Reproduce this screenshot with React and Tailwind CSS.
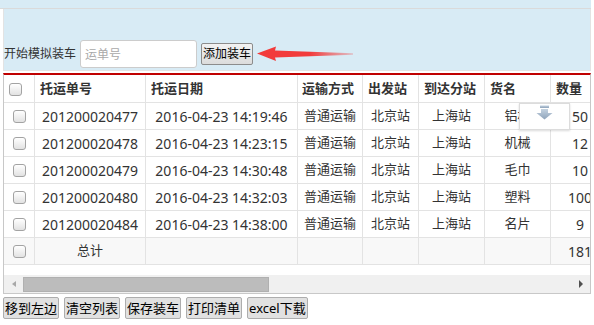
import React from "react";

const rows = [
  ["201200020477", "2016-04-23 14:19:46", "普通运输", "北京站", "上海站", "铝材", "50"],
  ["201200020478", "2016-04-23 14:23:15", "普通运输", "北京站", "上海站", "机械", "12"],
  ["201200020479", "2016-04-23 14:30:48", "普通运输", "北京站", "上海站", "毛巾", "10"],
  ["201200020480", "2016-04-23 14:32:03", "普通运输", "北京站", "上海站", "塑料", "100"],
  ["201200020484", "2016-04-23 14:38:00", "普通运输", "北京站", "上海站", "名片", "9"],
];

function Check() {
  return (
    <span className="block w-[13px] h-[13px] border border-[#a3a3a3] rounded-[3px] bg-linear-to-b from-white to-[#e2e2e2]" />
  );
}

const widths = ["w-[31px]", "w-[111px]", "w-[152px]", "w-[65px]", "w-[56px]", "w-[66px]", "w-[66px]", "w-[59px]"];

function Cell({ i, children, className = "" }) {
  return (
    <div className={`${widths[i]} shrink-0 h-full border-r border-[#e3e3e3] flex items-center ${className}`}>
      {children}
    </div>
  );
}

export default function App() {
  return (
    <div className="w-[594px] h-[325px] bg-white overflow-hidden text-[#333] font-['Noto_Sans','Noto_Sans_CJK_SC',sans-serif]">
      <div className="h-[9px] mr-[3px] bg-[#d8ebf5] border-b border-[#dadada]" />
      <div className="h-[62px] mx-[3px] bg-[#d8ebf5] border-x border-b border-[#e3e3e3] flex items-end pb-[2px]">
        <div className="flex items-center h-[28px]">
          <span className="text-[12px] leading-none text-[#333]">开始模拟装车</span>
          <input
            className="ml-[4px] w-[117px] h-[28px] border border-[#cccccc] rounded-[3px] bg-white px-[4px] text-[12px] placeholder:text-[#a9a9a9] outline-none"
            placeholder="运单号"
          />
          <button className="ml-[4px] w-[52px] h-[22px] border border-[#8c8c8c] rounded-[2px] bg-linear-to-b from-[#f2f2f2] to-[#dcdcdc] text-[12px] leading-none text-black">
            添加装车
          </button>
          <svg className="ml-[3px]" width="98" height="18" viewBox="0 0 98 18">
            <defs>
              <linearGradient id="ag" x1="0" x2="1" y1="0" y2="0">
                <stop offset="0" stopColor="#f23b3b" />
                <stop offset="0.55" stopColor="#f23b3b" />
                <stop offset="1" stopColor="#f23b3b" stopOpacity="0.25" />
              </linearGradient>
            </defs>
            <polygon
              points="1,8.5 20,1.5 19,5.5 97,8.3 97,9.8 19,12.5 20,16"
              fill="url(#ag)"
            />
          </svg>
        </div>
      </div>

      <div className="mt-[2px] mx-[3px] h-[221px] border-t-2 border-t-[#c00000] border-x border-b border-x-[#c8c8c8] border-b-[#c8c8c8] relative overflow-hidden">
        <div className="w-[700px]">
          <div className="h-[28px] flex border-b border-[#e3e3e3] text-[13px] font-bold text-[#333]">
            <Cell i={0} className="pl-[5px] pt-[1px]"><Check /></Cell>
            <Cell i={1} className="pl-[5px]">托运单号</Cell>
            <Cell i={2} className="pl-[5px]">托运日期</Cell>
            <Cell i={3} className="pl-[4px]">运输方式</Cell>
            <Cell i={4} className="pl-[5px]">出发站</Cell>
            <Cell i={5} className="pl-[5px]">到达分站</Cell>
            <Cell i={6} className="pl-[5px]">货名</Cell>
            <Cell i={7} className="pl-[5px]">数量</Cell>
          </div>
          {rows.map((r, idx) => (
            <div key={idx} className="h-[27px] flex border-b border-[#e3e3e3] text-[13px] text-[#333] bg-white">
              <Cell i={0} className="justify-center"><Check /></Cell>
              <Cell i={1} className="justify-center text-[14px]">{r[0]}</Cell>
              <Cell i={2} className="justify-center text-[14px]">{r[1]}</Cell>
              <Cell i={3} className="justify-center">{r[2]}</Cell>
              <Cell i={4} className="justify-center">{r[3]}</Cell>
              <Cell i={5} className="justify-center">{r[4]}</Cell>
              <Cell i={6} className="justify-center">{r[5]}</Cell>
              <Cell i={7} className="justify-center text-[14px]">{r[6]}</Cell>
            </div>
          ))}
          <div className="h-[27px] flex border-b border-[#e3e3e3] text-[13px] text-[#333] bg-[#f8f8f8]">
            <Cell i={0} className="justify-center"><Check /></Cell>
            <Cell i={1} className="justify-center">总计</Cell>
            <Cell i={2} />
            <Cell i={3} />
            <Cell i={4} />
            <Cell i={5} />
            <Cell i={6} />
            <Cell i={7} className="justify-center text-[14px]">181</Cell>
          </div>
        </div>
        <div className="h-[10px]" />
        <div className="h-[18px] bg-[#f0f0f0] flex items-center relative">
          <span className="ml-[8px] w-0 h-0 border-y-[3px] border-y-transparent border-r-[4px] border-r-[#a8a8a8]" />
          <span className="ml-[7px] w-[246px] h-[15px] bg-[#bcbcbc] border border-[#b0b0b0]" />
          <span className="ml-auto mr-[7px] w-0 h-0 border-y-[4px] border-y-transparent border-l-[4px] border-l-[#505050]" />
        </div>

        <div className="absolute left-[515px] top-[28px] w-[51px] h-[27px] bg-white border border-[#dcdcdc] shadow-[0_1px_2px_rgba(0,0,0,0.15)] flex justify-center pt-[1px]">
          <svg width="18" height="15" viewBox="0 0 18 15">
            <defs>
              <linearGradient id="dg" x1="0" x2="0" y1="0" y2="1">
                <stop offset="0" stopColor="#c4d2e0" />
                <stop offset="1" stopColor="#8ea3ba" />
              </linearGradient>
            </defs>
            <rect x="4" y="0.5" width="9" height="2.5" fill="url(#dg)" />
            <polygon points="5,4 12,4 12,8 16.5,8 8.5,14.5 0.5,8 5,8" fill="url(#dg)" />
          </svg>
        </div>
      </div>

      <div className="mt-[3px] ml-[3px] flex gap-[5px]">
        {["移到左边", "清空列表", "保存装车", "打印清单", "excel下载"].map((t) => (
          <button
            key={t}
            className="h-[22px] px-[1px] border border-[#adadad] rounded-[2px] bg-[#e1e1e1] text-[13px] leading-none text-black"
          >
            {t}
          </button>
        ))}
      </div>
    </div>
  );
}
